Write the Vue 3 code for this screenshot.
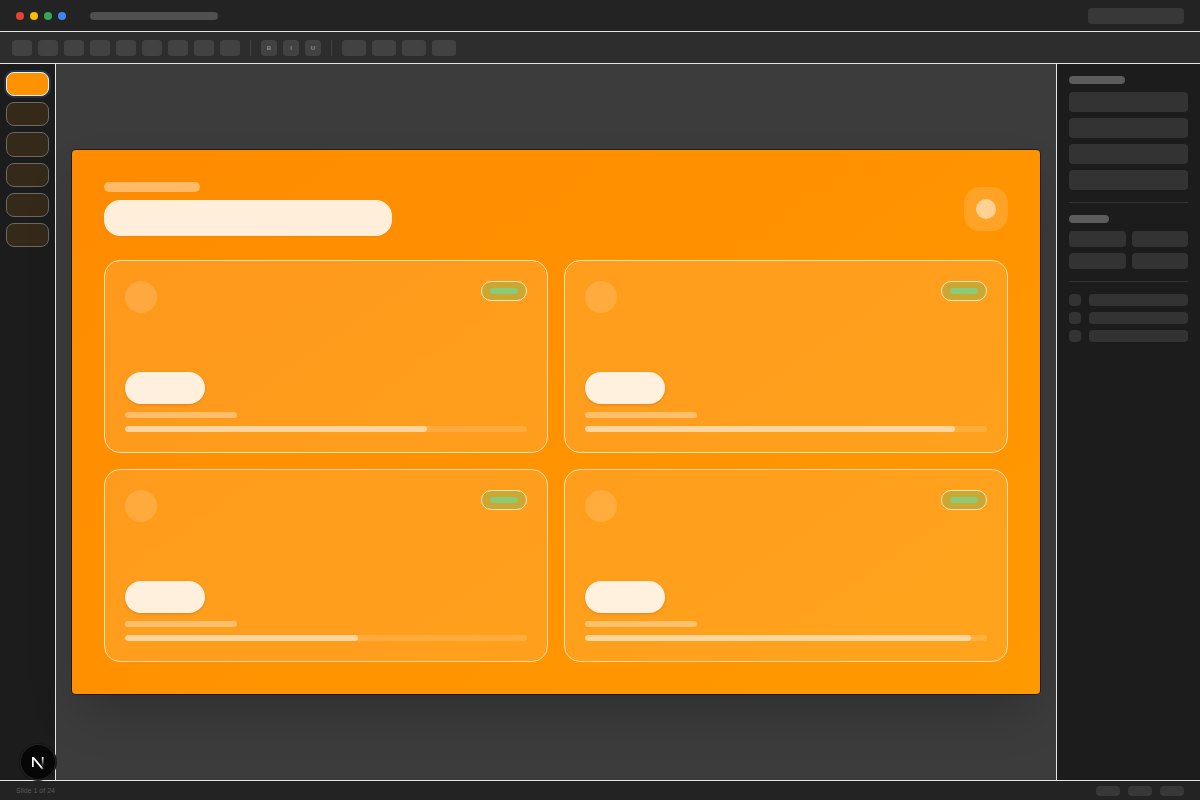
<script setup>
import { ref } from "vue";

const slideTotal = 24;
const thumbs = [1, 2, 3, 4, 5, 6];
const current = ref(1);

const tools = [
  "New slide",
  "Undo",
  "Redo",
  "Print",
  "Zoom",
  "Select",
  "Text box",
  "Image",
  "Shape",
];
const formats = ["B", "I", "U"];
const menus = ["Background", "Layout", "Theme", "Transition"];

const cards = ref([
  { id: 1, progress: 75 },
  { id: 2, progress: 92 },
  { id: 3, progress: 58 },
  { id: 4, progress: 96 },
]);
</script>

<template>
  <div class="app">
    <header class="titlebar">
      <div class="dots">
        <span class="dot red"></span>
        <span class="dot yellow"></span>
        <span class="dot green"></span>
        <span class="dot blue"></span>
      </div>
      <div class="doc-name"></div>
      <button class="share" aria-label="Share"></button>
    </header>

    <div class="toolbar">
      <button v-for="tool in tools" :key="tool" class="tool" :aria-label="tool"></button>
      <span class="separator"></span>
      <button v-for="format in formats" :key="format" class="tool format">{{ format }}</button>
      <span class="separator"></span>
      <button v-for="menu in menus" :key="menu" class="tool menu" :aria-label="menu"></button>
    </div>

    <div class="workspace">
      <nav class="thumbs">
        <button
          v-for="n in thumbs"
          :key="n"
          class="thumb"
          :class="{ active: n === current }"
          :aria-label="'Slide ' + n"
          @click="current = n"
        ></button>
      </nav>

      <main class="canvas">
        <section class="slide">
          <div class="slide-header">
            <div class="heading">
              <div class="eyebrow"></div>
              <div class="headline"></div>
            </div>
            <div class="logo"><span class="logo-dot"></span></div>
          </div>

          <div class="cards">
            <article v-for="card in cards" :key="card.id" class="card">
              <div class="card-top">
                <span class="avatar"></span>
                <span class="badge"><span class="badge-text"></span></span>
              </div>
              <div class="card-bottom">
                <div class="value"></div>
                <div class="caption"></div>
                <div class="track">
                  <div class="fill" :style="{ width: card.progress + '%' }"></div>
                </div>
              </div>
            </article>
          </div>
        </section>
      </main>

      <aside class="panel">
        <div class="group">
          <div class="panel-label"></div>
          <div class="fields">
            <div v-for="n in 4" :key="n" class="field"></div>
          </div>
        </div>
        <div class="group">
          <div class="panel-label short"></div>
          <div class="swatches">
            <div v-for="n in 4" :key="n" class="swatch"></div>
          </div>
        </div>
        <div class="group">
          <div class="fields">
            <div v-for="n in 3" :key="n" class="layer">
              <span class="layer-icon"></span>
              <span class="layer-name"></span>
            </div>
          </div>
        </div>
      </aside>
    </div>

    <footer class="statusbar">
      <span>Slide {{ current }} of {{ slideTotal }}</span>
      <div class="views">
        <button class="view" aria-label="Normal view"></button>
        <button class="view" aria-label="Grid view"></button>
        <button class="view" aria-label="Present"></button>
      </div>
    </footer>

    <button class="dev-badge" aria-label="Dev tools">
      <svg width="36" height="36" viewBox="0 0 36 36" fill="none">
        <defs>
          <linearGradient id="diagonal" x1="18" y1="18" x2="23.5" y2="25.5" gradientUnits="userSpaceOnUse">
            <stop stop-color="#fff" />
            <stop offset="0.6" stop-color="#fff" />
            <stop offset="1" stop-color="#fff" stop-opacity="0.2" />
          </linearGradient>
          <linearGradient id="stem" x1="22" y1="13" x2="22" y2="23" gradientUnits="userSpaceOnUse">
            <stop stop-color="#fff" />
            <stop offset="1" stop-color="#fff" stop-opacity="0" />
          </linearGradient>
        </defs>
        <path d="M12 13h2l9.7 11.8-1.5 1L13.7 15.6V23H12z" fill="url(#diagonal)" />
        <path d="M21.8 13h1.7v10h-1.7z" fill="url(#stem)" />
      </svg>
    </button>
  </div>
</template>

<style>
body {
  background: #3c3c3c;
}
</style>

<style scoped>
.app {
  display: flex;
  flex-direction: column;
  min-height: 100vh;
  font-family: "Liberation Sans", Arial, sans-serif;
  background: #3c3c3c;
}

.app * {
  box-sizing: border-box;
}

button {
  padding: 0;
  border: none;
  font-family: inherit;
  cursor: pointer;
}

/* title bar */
.titlebar {
  display: flex;
  align-items: center;
  gap: 24px;
  height: 32px;
  padding: 0 16px;
  background: #232323;
  border-bottom: 1px solid #e5e5e5;
}

.dots {
  display: flex;
  gap: 6px;
}

.dot {
  width: 8px;
  height: 8px;
  border-radius: 50%;
}

.red {
  background: #ea4335;
}

.yellow {
  background: #fbbc05;
}

.green {
  background: #34a853;
}

.blue {
  background: #4285f4;
}

.doc-name {
  width: 128px;
  height: 8px;
  border-radius: 4px;
  background: #505050;
}

.share {
  width: 96px;
  height: 16px;
  margin-left: auto;
  border-radius: 4px;
  background: #383838;
}

/* toolbar */
.toolbar {
  display: flex;
  align-items: center;
  gap: 6px;
  height: 32px;
  padding: 0 12px;
  background: #2d2d2d;
  border-bottom: 1px solid #e5e5e5;
}

.tool {
  width: 20px;
  height: 16px;
  border-radius: 4px;
  background: #424242;
}

.tool.format {
  width: 16px;
  font-size: 6px;
  line-height: 16px;
  font-weight: 700;
  color: #8c8c8c;
}

.tool.menu {
  width: 24px;
}

.separator {
  width: 1px;
  height: 16px;
  margin: 0 4px;
  background: #424242;
}

.workspace {
  display: flex;
  flex: 1;
}

/* slide list */
.thumbs {
  display: flex;
  flex-direction: column;
  gap: 6px;
  width: 56px;
  padding: 8px 6px;
  background: #1c1c1c;
  border-right: 1px solid #e5e5e5;
}

.thumb {
  aspect-ratio: 16 / 9;
  border: 1px solid #6b6963;
  border-radius: 8px;
  background: #35291a;
}

.thumb.active {
  border-color: #fff0dc;
  background: #ff9200;
  box-shadow: 0 0 0 2px #1f3352;
}

/* canvas */
.canvas {
  display: flex;
  flex: 1;
  align-items: center;
  justify-content: center;
  padding: 16px;
  background: #3c3c3c;
}

.slide {
  display: flex;
  flex-direction: column;
  gap: 24px;
  width: 100%;
  aspect-ratio: 16 / 9;
  padding: 32px;
  border-radius: 4px;
  background: linear-gradient(145deg, #ff8b00, #ff9900);
  box-shadow: 0 0 0 1px rgba(0, 0, 0, 0.5), 0 24px 48px -12px rgba(0, 0, 0, 0.25);
}

.slide-header {
  display: flex;
  align-items: center;
  justify-content: space-between;
}

.heading {
  display: flex;
  flex-direction: column;
  gap: 8px;
}

.eyebrow {
  width: 96px;
  height: 10px;
  border-radius: 5px;
  background: rgba(255, 255, 255, 0.4);
}

.headline {
  width: 288px;
  height: 36px;
  border-radius: 16px;
  background: rgba(255, 255, 255, 0.85);
  box-shadow: 0 1px 2px rgba(0, 0, 0, 0.06);
}

.logo {
  display: flex;
  align-items: center;
  justify-content: center;
  width: 44px;
  height: 44px;
  border-radius: 16px;
  background: rgba(255, 255, 255, 0.15);
}

.logo-dot {
  width: 20px;
  height: 20px;
  border-radius: 50%;
  background: rgba(255, 255, 255, 0.5);
}

/* cards */
.cards {
  display: grid;
  flex: 1;
  grid-template-columns: 1fr 1fr;
  gap: 16px;
}

.card {
  display: flex;
  flex-direction: column;
  justify-content: space-between;
  padding: 20px;
  border: 1px solid #ffe2b0;
  border-radius: 16px;
  background: rgba(255, 255, 255, 0.11);
}

.card-top {
  display: flex;
  align-items: flex-start;
  justify-content: space-between;
}

.avatar {
  width: 32px;
  height: 32px;
  border-radius: 50%;
  background: rgba(255, 255, 255, 0.15);
}

.badge {
  padding: 6px 8px;
  border: 1px solid #f3e8b4;
  border-radius: 10px;
  background: #cba834;
}

.badge-text {
  display: block;
  width: 28px;
  height: 6px;
  border-radius: 3px;
  background: #8bca78;
}

.card-bottom {
  display: flex;
  flex-direction: column;
  gap: 8px;
}

.value {
  width: 80px;
  height: 32px;
  border-radius: 16px;
  background: rgba(255, 255, 255, 0.85);
  box-shadow: 0 1px 3px rgba(0, 0, 0, 0.15);
}

.caption {
  width: 112px;
  height: 6px;
  border-radius: 3px;
  background: rgba(255, 255, 255, 0.35);
}

.track {
  height: 6px;
  border-radius: 3px;
  background: rgba(255, 255, 255, 0.15);
  overflow: hidden;
}

.fill {
  height: 100%;
  border-radius: 3px;
  background: rgba(255, 255, 255, 0.5);
}

/* properties panel */
.panel {
  display: flex;
  flex-direction: column;
  gap: 12px;
  width: 144px;
  padding: 12px;
  background: #1c1c1c;
  border-left: 1px solid #e5e5e5;
}

.group {
  display: flex;
  flex-direction: column;
  gap: 8px;
}

.group + .group {
  padding-top: 12px;
  border-top: 1px solid #333;
}

.panel-label {
  width: 56px;
  height: 8px;
  border-radius: 4px;
  background: #5c5c5c;
}

.panel-label.short {
  width: 40px;
}

.fields {
  display: flex;
  flex-direction: column;
  gap: 6px;
}

.field {
  height: 20px;
  border-radius: 4px;
  background: #333;
}

.swatches {
  display: grid;
  grid-template-columns: 1fr 1fr;
  gap: 6px;
}

.swatch {
  height: 16px;
  border-radius: 4px;
  background: #333;
}

.layer {
  display: flex;
  gap: 8px;
}

.layer-icon {
  width: 12px;
  height: 12px;
  border-radius: 4px;
  background: #333;
}

.layer-name {
  flex: 1;
  height: 12px;
  border-radius: 4px;
  background: #333;
}

/* status bar */
.statusbar {
  display: flex;
  align-items: center;
  justify-content: space-between;
  height: 20px;
  padding: 0 16px;
  font-size: 7px;
  line-height: 10px;
  color: #5a5a5a;
  background: #232323;
  border-top: 1px solid #e5e5e5;
}

.views {
  display: flex;
  gap: 8px;
}

.view {
  width: 24px;
  height: 10px;
  border-radius: 4px;
  background: #383838;
}

/* floating badge */
.dev-badge {
  position: fixed;
  left: 20px;
  bottom: 20px;
  width: 36px;
  height: 36px;
  border-radius: 50%;
  background: #060606;
  box-shadow: inset 0 0 0 1px #262626, 0 0 0 1px #171717;
}

.dev-badge svg {
  display: block;
}
</style>
